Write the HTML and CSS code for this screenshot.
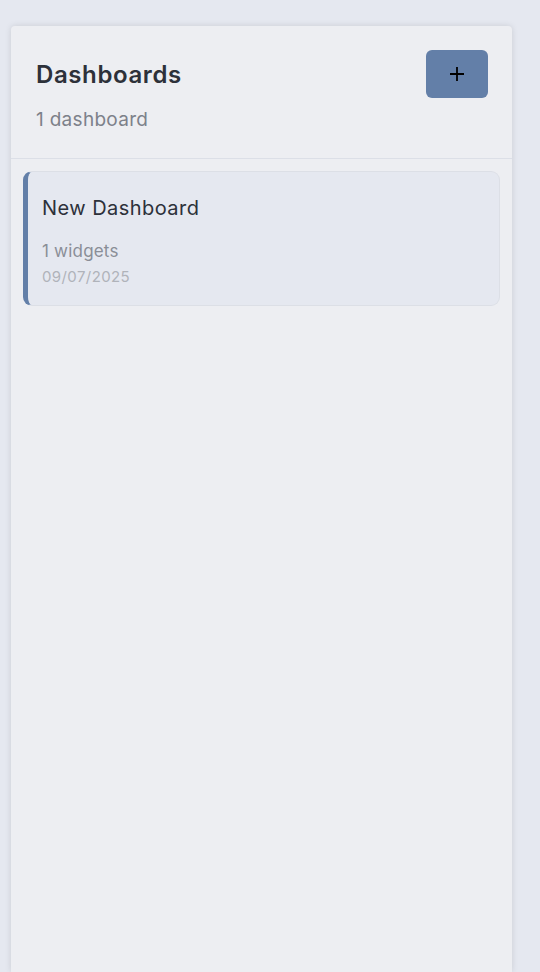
FILE: index.html
```html
<!DOCTYPE html>
<html lang="en">
<head>
    <meta charset="UTF-8">
    <meta name="viewport" content="width=device-width, initial-scale=1.0">
    <title>Dashboards</title>
    <link rel="stylesheet" href="styles.css">
</head>
<body>
    <div class="panel">
        <div class="panel-header">
            <div class="header-text">
                <h1>Dashboards</h1>
                <p class="count">1 dashboard</p>
            </div>
            <button class="add-btn" aria-label="Add dashboard">
                <svg width="14" height="14" viewBox="0 0 14 14"><path d="M7 0v14M0 7h14" stroke="#000" stroke-width="1.8"/></svg>
            </button>
        </div>
        <div class="list">
            <div class="card active">
                <div class="card-title">New Dashboard</div>
                <div class="card-meta">1 widgets</div>
                <div class="card-date">09/07/2025</div>
            </div>
        </div>
    </div>
</body>
</html>
```

FILE: styles.css
```css
body {
    font-family: Inter, "Noto Sans", sans-serif;
    background: #e5e8f0;
    margin: 0;
    padding: 26px 0 0 11px;
    height: 100vh;
    box-sizing: border-box;
    overflow: hidden;
}
.panel {
    width: 501px;
    height: calc(100vh - 26px);
    background: #edeef2;
    border-radius: 4px 4px 0 0;
    box-shadow: 0 0 6px rgba(0,0,0,0.12);
    box-sizing: border-box;
}
.panel-header {
    display: flex;
    justify-content: space-between;
    align-items: flex-start;
    padding: 24px 24px 26px 25px;
    border-bottom: 1px solid #dcdfe7;
}
h1 {
    margin: 0;
    font-size: 24px;
    font-weight: 600;
    line-height: 49px;
    letter-spacing: 0.6px;
    color: #2d313a;
}
.count {
    margin: 9px 0 0;
    font-size: 19px;
    line-height: 24px;
    letter-spacing: 0.3px;
    color: #7d818a;
}
.add-btn {
    display: flex;
    align-items: center;
    justify-content: center;
    width: 62px;
    height: 48px;
    border: none;
    border-radius: 6px;
    background: #637fa8;
    cursor: pointer;
}
.list {
    padding: 12px 12px;
}
.card {
    background: #e5e8f0;
    border: 1px solid #dcdfe6;
    border-radius: 9px;
    padding: 24px 16px 18px 14px;
}
.card.active {
    border-left: 5px solid #637fa8;
}
.card-title {
    font-size: 20px;
    font-weight: 400;
    line-height: 24px;
    letter-spacing: 0.45px;
    color: #2d313a;
}
.card-meta {
    margin-top: 21px;
    font-size: 17px;
    line-height: 20px;
    letter-spacing: 0.2px;
    color: #8a8e97;
}
.card-date {
    margin-top: 6px;
    font-size: 15px;
    line-height: 20px;
    letter-spacing: 0.4px;
    color: #b0b3ba;
}
```
